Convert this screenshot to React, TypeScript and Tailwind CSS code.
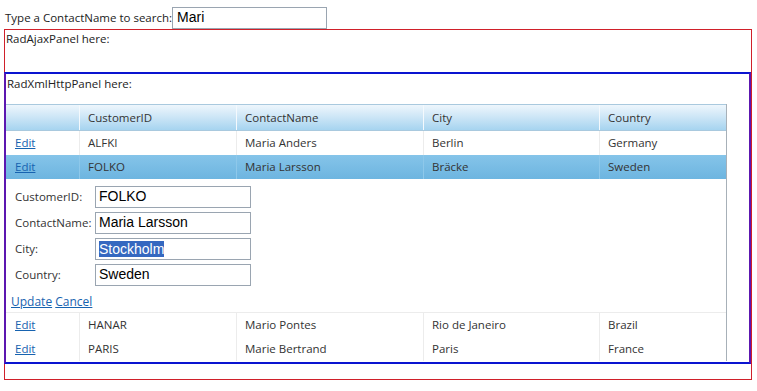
import React from 'react'

const cols = 'grid grid-cols-[73px_157px_187px_176px_128px]'

type Row = { id: string; name: string; city: string; country: string }

const top: Row[] = [{ id: 'ALFKI', name: 'Maria Anders', city: 'Berlin', country: 'Germany' }]
const bottom: Row[] = [
  { id: 'HANAR', name: 'Mario Pontes', city: 'Rio de Janeiro', country: 'Brazil' },
  { id: 'PARIS', name: 'Marie Bertrand', city: 'Paris', country: 'France' },
]

function DataRow({ r, selected }: { r: Row; selected?: boolean }) {
  const cell = selected
    ? 'h-full flex items-center px-2 border-l border-[#8ec8ea]'
    : 'h-full flex items-center px-2 border-l border-[#ececec]'
  return (
    <div className={`${cols} h-[24px] ${selected ? 'bg-gradient-to-b from-[#85c4e9] to-[#6db5e0]' : 'bg-white'}`}>
      <div className="h-full flex items-center pl-[9px]">
        <a className="text-[#1763b0] underline">Edit</a>
      </div>
      <div className={cell}>{r.id}</div>
      <div className={cell}>{r.name}</div>
      <div className={cell}>{r.city}</div>
      <div className={cell}>{r.country}</div>
    </div>
  )
}

function Field({ label, value, selected }: { label: string; value: string; selected?: boolean }) {
  return (
    <div className="flex items-center h-[21px]">
      <span className="w-[80px] text-[#333]">{label}</span>
      <div className="w-[156px] h-[22px] border border-[#9aa5b1] bg-white flex items-center pl-[3px] font-['Liberation_Sans',sans-serif] text-[14px] text-black">
        {selected ? <span className="bg-[#3568c0] text-white leading-[16px]">{value}</span> : value}
      </div>
    </div>
  )
}

export default function App() {
  return (
    <div className="w-[757px] h-[391px] bg-white font-['Open_Sans',sans-serif] text-[11.5px] text-[#222] overflow-hidden">
      <div className="flex items-center h-[29px] pl-[5px] pt-[7px] pb-[1px]">
        <span>Type a ContactName to search:</span>
        <div className="w-[155px] h-[22px] border border-[#9aa5b1] flex items-center pl-[4px] font-['Liberation_Sans',sans-serif] text-[14px] text-black">
          Mari
        </div>
      </div>
      <div className="ml-[4px] w-[748px] h-[351px] border border-[#d0202a]">
        <div className="pl-[1px] h-[42px] pt-[1px] leading-[16px]">RadAjaxPanel here:</div>
        <div className="h-[292px] border-y-2 border-y-[#0a14d0] border-x-2 border-x-[#5c17b0] -ml-[1px]">
          <div className="h-[30px] pl-[1px] pt-[2px] leading-[16px]">RadXmlHttpPanel here:</div>
          <div className="w-[721px] border-r border-[#a7b0b8] text-[#333]">
            <div className={`${cols} h-[27px] bg-gradient-to-b from-[#eef6fc] via-[#cbe5f6] to-[#a6d4f0] border-t border-b border-[#a9c9de]`}>
              <div />
              <div className="flex items-center px-2 border-l border-[#f4f9fd]">CustomerID</div>
              <div className="flex items-center px-2 border-l border-[#f4f9fd]">ContactName</div>
              <div className="flex items-center px-2 border-l border-[#f4f9fd]">City</div>
              <div className="flex items-center px-2 border-l border-[#f4f9fd]">Country</div>
            </div>
            {top.map((r) => (
              <DataRow key={r.id} r={r} />
            ))}
            <DataRow r={{ id: 'FOLKO', name: 'Maria Larsson', city: 'Bräcke', country: 'Sweden' }} selected />
            <div className="h-[134px] pl-[9px] pt-[7px] border-b border-[#ececec]">
              <div className="flex flex-col gap-[5px]">
                <Field label="CustomerID:" value="FOLKO" />
                <Field label="ContactName:" value="Maria Larsson" />
                <Field label="City:" value="Stockholm" selected />
                <Field label="Country:" value="Sweden" />
              </div>
              <div className="mt-[8px] -ml-[4px] text-[12px] text-[#1763b0]">
                <a className="underline">Update</a> <a className="underline">Cancel</a>
              </div>
            </div>
            {bottom.map((r) => (
              <DataRow key={r.id} r={r} />
            ))}
          </div>
        </div>
      </div>
    </div>
  )
}
